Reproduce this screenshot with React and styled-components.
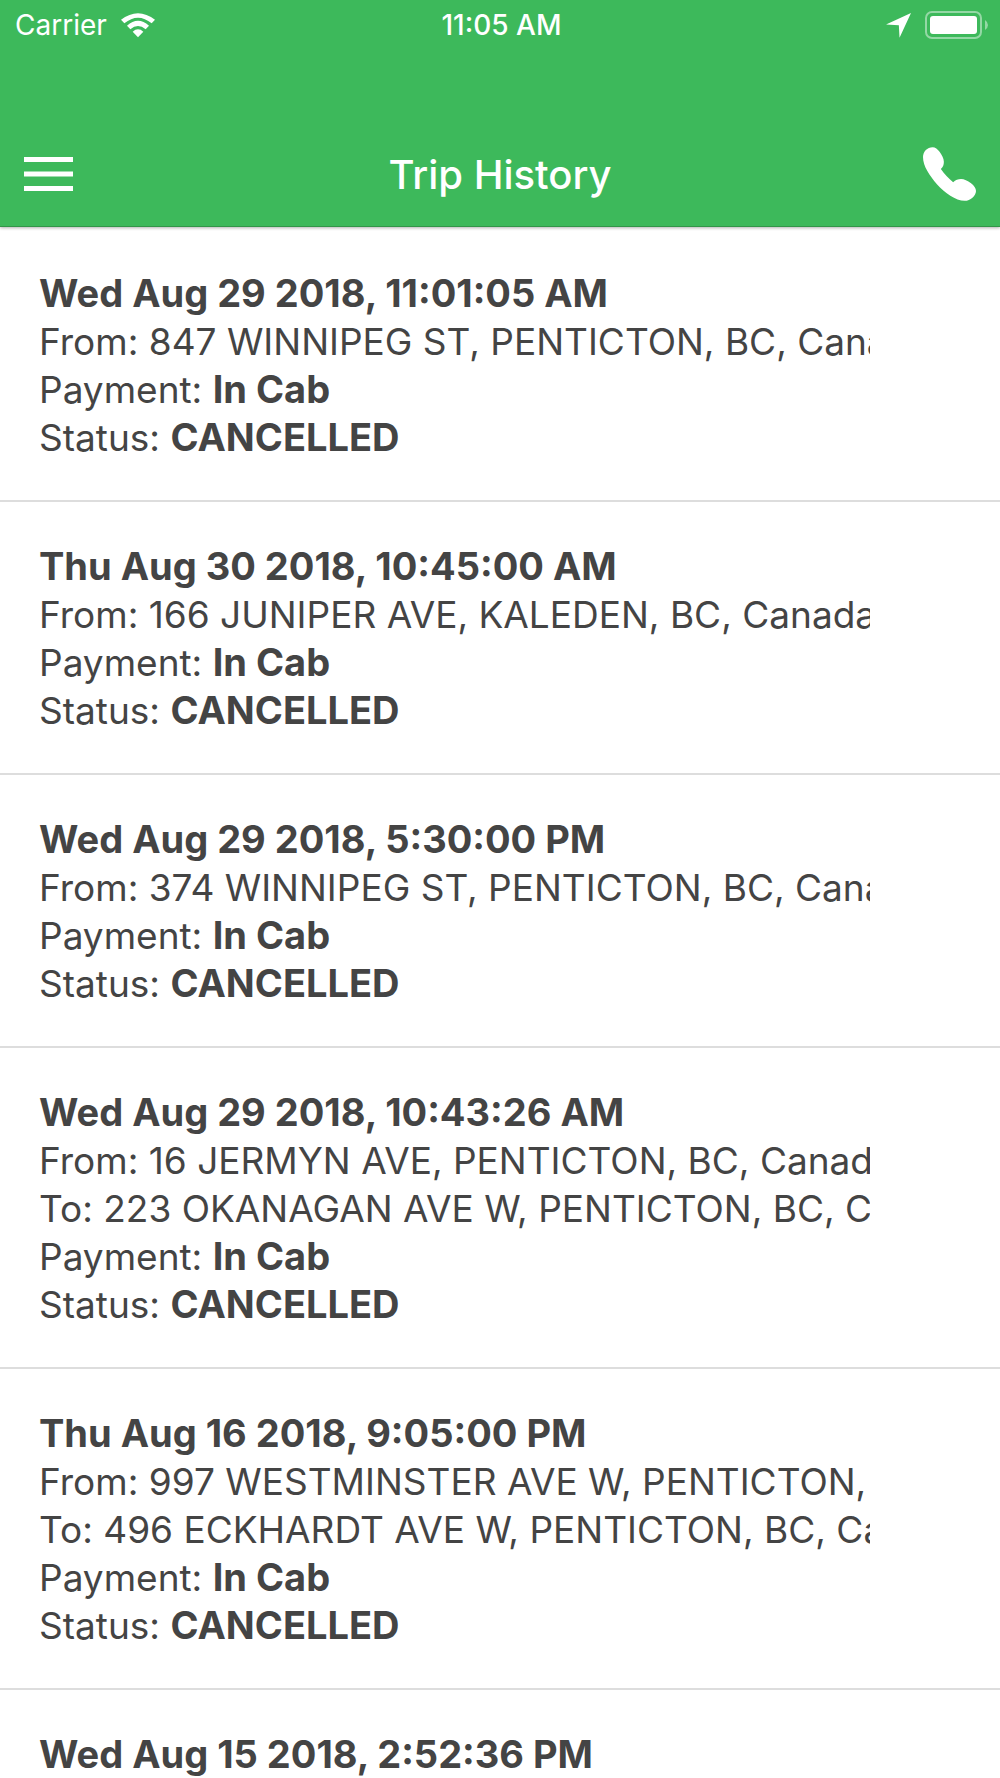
import React from 'react'
import styled, { createGlobalStyle } from 'styled-components'

const GlobalStyle = createGlobalStyle`
  * {
    box-sizing: border-box;
  }
  html, body {
    margin: 0;
    background: #fff;
  }
  body {
    height: 100vh;
    overflow: hidden;
    font-family: Inter, "Liberation Sans", sans-serif;
    color: #444;
  }
`

const Screen = styled.div`
  display: flex;
  flex-direction: column;
  height: 100vh;
`

const Header = styled.header`
  flex: none;
  background: #3db95b;
  color: #fff;
  border-bottom: 1px solid #329549;
  box-shadow: 0 1px 3px rgba(0, 0, 0, 0.3);
  z-index: 1;
`

const StatusBar = styled.div`
  display: grid;
  grid-template-columns: 1fr auto 1fr;
  align-items: center;
  height: 50px;
  padding: 0 12px 0 15px;
  font-size: 28px;
`

const StatusGroup = styled.div`
  display: flex;
  align-items: center;
  justify-content: ${({ $end }) => ($end ? 'flex-end' : 'flex-start')};
  gap: 14px;
`

const Clock = styled.time`
  font-weight: 500;
`

const NavBar = styled.nav`
  display: grid;
  grid-template-columns: 1fr auto 1fr;
  align-items: center;
  height: 104px;
  margin-top: 72px;
  padding: 0 24px;
`

const Title = styled.h1`
  margin: 0;
  font-size: 40px;
  font-weight: 500;
`

const IconButton = styled.button`
  display: flex;
  justify-self: ${({ $end }) => ($end ? 'end' : 'start')};
  padding: 0;
  border: 0;
  background: none;
  color: inherit;
`

const TripList = styled.ul`
  flex: 1;
  min-height: 0;
  margin: 0;
  padding: 2px 0 0;
  overflow: hidden;
  list-style: none;
`

const Trip = styled.li`
  padding: 40px 130px 38px 39px;
  border-bottom: 2px solid #ddd;
`

const TripDate = styled.h2`
  margin: 0;
  font-size: 38px;
  line-height: 49px;
  font-weight: 700;
  white-space: nowrap;
`

const Line = styled.p`
  margin: 0;
  font-size: 37px;
  line-height: 48px;
  white-space: nowrap;
  overflow: hidden;
`

const Value = styled.strong`
  font-size: 38px;
  line-height: 1;
`

const trips = [
  {
    date: 'Wed Aug 29 2018, 11:01:05 AM',
    from: '847 WINNIPEG ST, PENTICTON, BC, Canada',
  },
  {
    date: 'Thu Aug 30 2018, 10:45:00 AM',
    from: '166 JUNIPER AVE, KALEDEN, BC, Canada',
  },
  {
    date: 'Wed Aug 29 2018, 5:30:00 PM',
    from: '374 WINNIPEG ST, PENTICTON, BC, Canada',
  },
  {
    date: 'Wed Aug 29 2018, 10:43:26 AM',
    from: '16 JERMYN AVE, PENTICTON, BC, Canada',
    to: '223 OKANAGAN AVE W, PENTICTON, BC, Canada',
  },
  {
    date: 'Thu Aug 16 2018, 9:05:00 PM',
    from: '997 WESTMINSTER AVE W, PENTICTON, BC, Canada',
    to: '496 ECKHARDT AVE W, PENTICTON, BC, Canada',
  },
  {
    date: 'Wed Aug 15 2018, 2:52:36 PM',
  },
]

const WifiIcon = () => (
  <svg width="34" height="25" viewBox="0 0 102 75" fill="currentColor" aria-hidden="true">
    <path d="M0 20 Q51 -19 102 20 L92 31 Q51 -3 10 31 Z" />
    <path d="M18 38 Q51 9 84 38 L74 49 Q51 29 28 49 Z" />
    <path d="M35 56 Q51 42 67 56 L51 73 Z" />
  </svg>
)

const LocationIcon = () => (
  <svg width="25" height="25" viewBox="0 0 72 72" fill="currentColor" aria-hidden="true">
    <path d="M72 0 L39 71 L37 35 L0 33 Z" />
  </svg>
)

const BatteryIcon = () => (
  <svg width="63" height="28" viewBox="0 0 63 28" fill="none" aria-hidden="true">
    <rect x="1" y="1" width="55" height="26" rx="6" stroke="#fff" strokeOpacity="0.45" strokeWidth="2" />
    <rect x="5" y="5" width="47" height="18" rx="3" fill="#fff" />
    <path d="M60 9 Q63 11 63 14 Q63 17 60 19 Z" fill="#fff" fillOpacity="0.45" />
  </svg>
)

const MenuIcon = () => (
  <svg width="49" height="34" viewBox="0 0 49 34" fill="currentColor" aria-hidden="true">
    <rect width="49" height="5" />
    <rect y="14.5" width="49" height="5" />
    <rect y="29" width="49" height="5" />
  </svg>
)

const PhoneIcon = () => (
  <svg width="53" height="54" viewBox="0 0 160 162" fill="currentColor" aria-hidden="true">
    <path d="M29 0 C13 0 0 13 0 30 C0 58 20 86 42 112 C66 138 98 162 126 162 C143 162 160 146 160 132 C160 124 154 116 145 109 C135 101 124 96 115 96 C106 96 98 99 91 106 C78 95 63 80 54 66 C60 60 63 54 63 44 C63 35 57 24 50 14 C44 5 37 0 29 0 Z" />
  </svg>
)

const TripItem = ({ trip }) => (
  <Trip>
    <TripDate>{trip.date}</TripDate>
    {trip.from && (
      <>
        <Line>From: {trip.from}</Line>
        {trip.to && <Line>To: {trip.to}</Line>}
        <Line>Payment: <Value>In Cab</Value></Line>
        <Line>Status: <Value>CANCELLED</Value></Line>
      </>
    )}
  </Trip>
)

const App = () => {
  return (
    <Screen>
      <GlobalStyle />
      <Header>
        <StatusBar>
          <StatusGroup>
            <span>Carrier</span>
            <WifiIcon />
          </StatusGroup>
          <Clock>11:05 AM</Clock>
          <StatusGroup $end>
            <LocationIcon />
            <BatteryIcon />
          </StatusGroup>
        </StatusBar>
        <NavBar>
          <IconButton type="button" aria-label="Menu">
            <MenuIcon />
          </IconButton>
          <Title>Trip History</Title>
          <IconButton $end type="button" aria-label="Call">
            <PhoneIcon />
          </IconButton>
        </NavBar>
      </Header>
      <TripList>
        {trips.map((trip) => (
          <TripItem key={trip.date} trip={trip} />
        ))}
      </TripList>
    </Screen>
  )
}

export default App
